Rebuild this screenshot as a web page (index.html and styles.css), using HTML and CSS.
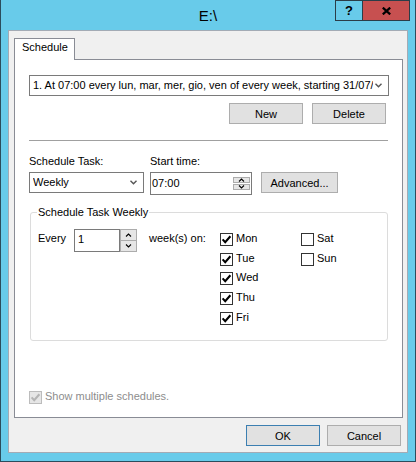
FILE: index.html
```html
<!DOCTYPE html>
<html lang="en">
<head>
    <meta charset="UTF-8">
    <title>E:\</title>
    <link rel="stylesheet" href="styles.css">
</head>
<body>
    <div class="window">
        <div class="titlebar">
            <div></div>
            <div class="title">E:\</div>
            <div class="caption-buttons">
                <div class="cap-btn help">?</div>
                <div class="cap-btn close">
                    <svg width="9" height="8" viewBox="0 0 9 8">
                        <path d="M0.8 0.6 L8.2 7.4 M8.2 0.6 L0.8 7.4" stroke="#000" stroke-width="2.2" fill="none"/>
                    </svg>
                </div>
            </div>
        </div>

        <div class="client">
            <div class="tabs">
                <div class="tab">Schedule</div>
            </div>

            <div class="panel">
                <div class="combo schedule-list">
                    <span class="combo-text">1. At 07:00 every lun, mar, mer, gio, ven of every week, starting 31/07/</span>
                    <svg class="chevron" width="7" height="5" viewBox="0 0 7 5"><path d="M0.5 0.8 L3.5 3.8 L6.5 0.8" stroke="#555" stroke-width="1.4" fill="none"/></svg>
                </div>

                <div class="list-buttons">
                    <button class="btn">New</button>
                    <button class="btn">Delete</button>
                </div>

                <div class="separator"></div>

                <div class="task-row">
                    <div class="field field-task">
                        <div class="label">Schedule Task:</div>
                        <div class="combo task-combo">
                            <span class="combo-text">Weekly</span>
                            <svg class="chevron" width="7" height="5" viewBox="0 0 7 5"><path d="M0.5 0.8 L3.5 3.8 L6.5 0.8" stroke="#555" stroke-width="1.4" fill="none"/></svg>
                        </div>
                    </div>
                    <div class="field field-time">
                        <div class="label">Start time:</div>
                        <div class="time-box">
                            <span class="time-text">07:00</span>
                            <div class="spin">
                                <div class="spin-btn"><svg width="7" height="4" viewBox="0 0 7 4"><path d="M1 3.5 L3.5 1 L6 3.5" stroke="#000" stroke-width="1.1" fill="none"/></svg></div>
                                <div class="spin-btn"><svg width="7" height="4" viewBox="0 0 7 4"><path d="M1 0.5 L3.5 3 L6 0.5" stroke="#000" stroke-width="1.1" fill="none"/></svg></div>
                            </div>
                        </div>
                    </div>
                    <button class="btn btn-advanced">Advanced...</button>
                </div>

                <div class="group">
                    <div class="group-title">Schedule Task Weekly</div>
                    <div class="weekly-row">
                        <span class="lbl-every">Every</span>
                        <div class="updown">
                            <div class="num-box">1</div>
                            <div class="updown-spin">
                                <div class="spin-btn"><svg width="7" height="4" viewBox="0 0 7 4"><path d="M1 3.5 L3.5 1 L6 3.5" stroke="#000" stroke-width="1.1" fill="none"/></svg></div>
                                <div class="spin-btn"><svg width="7" height="4" viewBox="0 0 7 4"><path d="M1 0.5 L3.5 3 L6 0.5" stroke="#000" stroke-width="1.1" fill="none"/></svg></div>
                            </div>
                        </div>
                        <span class="lbl-weeks">week(s) on:</span>
                        <div class="days">
                            <div class="check-item"><span class="checkbox checked"><svg width="11" height="11" viewBox="0 0 11 11"><path d="M1.6 5.4 L4.2 8.2 L9.4 2.2" stroke="#000" stroke-width="2.1" fill="none"/></svg></span><span>Mon</span></div>
                            <div class="check-item"><span class="checkbox checked"><svg width="11" height="11" viewBox="0 0 11 11"><path d="M1.6 5.4 L4.2 8.2 L9.4 2.2" stroke="#000" stroke-width="2.1" fill="none"/></svg></span><span>Tue</span></div>
                            <div class="check-item"><span class="checkbox checked"><svg width="11" height="11" viewBox="0 0 11 11"><path d="M1.6 5.4 L4.2 8.2 L9.4 2.2" stroke="#000" stroke-width="2.1" fill="none"/></svg></span><span>Wed</span></div>
                            <div class="check-item"><span class="checkbox checked"><svg width="11" height="11" viewBox="0 0 11 11"><path d="M1.6 5.4 L4.2 8.2 L9.4 2.2" stroke="#000" stroke-width="2.1" fill="none"/></svg></span><span>Thu</span></div>
                            <div class="check-item"><span class="checkbox checked"><svg width="11" height="11" viewBox="0 0 11 11"><path d="M1.6 5.4 L4.2 8.2 L9.4 2.2" stroke="#000" stroke-width="2.1" fill="none"/></svg></span><span>Fri</span></div>
                            <div class="check-item"><span class="checkbox"></span><span>Sat</span></div>
                            <div class="check-item"><span class="checkbox"></span><span>Sun</span></div>
                        </div>
                    </div>
                </div>

                <div class="check-item show-multiple">
                    <span class="checkbox disabled"><svg width="11" height="11" viewBox="0 0 11 11"><path d="M1.6 5.4 L4.2 8.2 L9.4 2.2" stroke="#b4b4b4" stroke-width="2.1" fill="none"/></svg></span>
                    <span>Show multiple schedules.</span>
                </div>
            </div>

            <div class="footer">
                <button class="btn btn-default">OK</button>
                <button class="btn">Cancel</button>
            </div>
        </div>
    </div>
</body>
</html>
```

FILE: styles.css
```css
body {
    margin: 0;
    font-family: "Liberation Sans", Arial, sans-serif;
    font-size: 11px;
    line-height: 13px;
    color: #000;
}
.window {
    width: 416px;
    height: 462px;
    box-sizing: border-box;
    background-color: #68cbea;
    border: 1px solid #2b4c5c;
    border-top: none;
    padding: 0 7px 8px;
    display: flex;
    flex-direction: column;
}
.titlebar {
    height: 30px;
    margin: 0 -7px;
    display: grid;
    grid-template-columns: 1fr auto 1fr;
}
.title {
    font-size: 15px;
    line-height: 28px;
    padding-top: 2px;
}
.caption-buttons {
    justify-self: end;
    display: flex;
    margin-right: 5px;
}
.cap-btn {
    height: 21px;
    box-sizing: border-box;
    border: 1px solid #2b3d48;
    display: flex;
    align-items: center;
    justify-content: center;
}
.help {
    width: 28px;
    font-weight: bold;
    font-size: 13px;
}
.close {
    width: 48px;
    margin-left: -1px;
    background-color: #c75050;
}
.client {
    flex: 1;
    background-color: #f0f0f0;
    border: 1px solid #a3abb5;
    padding: 7px 4px 0 5px;
    display: flex;
    flex-direction: column;
}
.tabs {
    display: flex;
}
.tab {
    position: relative;
    z-index: 1;
    width: 61px;
    height: 22px;
    box-sizing: border-box;
    margin-bottom: -1px;
    padding: 2px 0 0 7px;
    background-color: #fff;
    border: 1px solid #898c95;
    border-bottom: none;
}
.panel {
    height: 359px;
    box-sizing: border-box;
    background-color: #fff;
    border: 1px solid #898c95;
    padding: 15px 0 0 14px;
    display: flex;
    flex-direction: column;
}
.combo {
    height: 21px;
    box-sizing: border-box;
    border: 1px solid #7a7a7a;
    background-color: #fff;
    display: flex;
    align-items: center;
    padding: 0 5px 0 3px;
}
.combo-text {
    flex: 1;
    overflow: hidden;
    white-space: nowrap;
}
.chevron {
    flex: none;
    margin-left: 2px;
    margin-right: 1px;
}
.schedule-list {
    width: 360px;
}
.list-buttons {
    width: 357px;
    margin-top: 7px;
    display: flex;
    justify-content: flex-end;
    gap: 9px;
}
.btn {
    width: 74px;
    height: 21px;
    box-sizing: border-box;
    padding: 0;
    font-family: inherit;
    font-size: 11px;
    color: #000;
    background-color: #e1e1e1;
    border: 1px solid #adadad;
}
.btn-default {
    border-color: #3c7fb1;
}
.separator {
    width: 359px;
    height: 1px;
    margin-top: 16px;
    background-color: #a0a0a0;
}
.task-row {
    margin-top: 14px;
    display: flex;
    align-items: flex-start;
}
.field .label {
    margin-bottom: 4px;
}
.task-combo {
    width: 115px;
}
.field-time {
    margin-left: 6px;
}
.time-box {
    width: 102px;
    height: 23px;
    box-sizing: border-box;
    border: 1px solid #7a7a7a;
    display: flex;
    align-items: center;
    padding: 0 1px 0 1px;
}
.time-text {
    flex: 1;
}
.spin {
    width: 17px;
    display: flex;
    flex-direction: column;
    gap: 1px;
}
.spin-btn {
    flex: 1;
    height: 9px;
    background-color: #e6e6e6;
    border: 1px solid #acacac;
    box-sizing: border-box;
    display: flex;
    align-items: center;
    justify-content: center;
}
.btn-advanced {
    width: 77px;
    margin-top: 17px;
    margin-left: 9px;
}
.group {
    width: 358px;
    height: 129px;
    box-sizing: border-box;
    margin: 17px 0 0 1px;
    border: 1px solid #dcdcdc;
    border-radius: 3px;
    padding-left: 6px;
}
.group-title {
    width: fit-content;
    margin-top: -7px;
    padding: 0 1px;
    background-color: #fff;
}
.weekly-row {
    margin-top: 10px;
    display: flex;
    align-items: flex-start;
}
.lbl-every {
    margin: 3px 0 0 1px;
    width: 36px;
}
.updown {
    display: flex;
    height: 23px;
}
.num-box {
    width: 46px;
    box-sizing: border-box;
    border: 1px solid #7a7a7a;
    padding: 3px 0 0 3px;
}
.updown-spin {
    width: 17px;
    display: flex;
    flex-direction: column;
}
.updown-spin .spin-btn {
    height: 12px;
}
.updown-spin .spin-btn + .spin-btn {
    border-top: none;
    height: 11px;
}
.lbl-weeks {
    width: 71px;
    margin: 3px 0 0 12px;
}
.days {
    margin-top: 4px;
    display: grid;
    grid-auto-flow: column;
    grid-template-rows: 20px 19px 20px 20px 13px;
    grid-template-columns: 81px 60px;
}
.check-item {
    display: flex;
    align-items: flex-start;
    gap: 3px;
}
.check-item span:last-child {
    margin-top: -1px;
}
.checkbox {
    width: 13px;
    height: 13px;
    box-sizing: border-box;
    border: 1px solid #333;
    background-color: #fff;
    display: flex;
}
.checkbox.disabled {
    border-color: #bcbcbc;
    background-color: #e6e6e6;
}
.show-multiple {
    margin-top: auto;
    margin-bottom: 13px;
    color: #8d8d8d;
}
.footer {
    margin-top: 7px;
    padding-right: 2px;
    display: flex;
    justify-content: flex-end;
    gap: 7px;
}
```
